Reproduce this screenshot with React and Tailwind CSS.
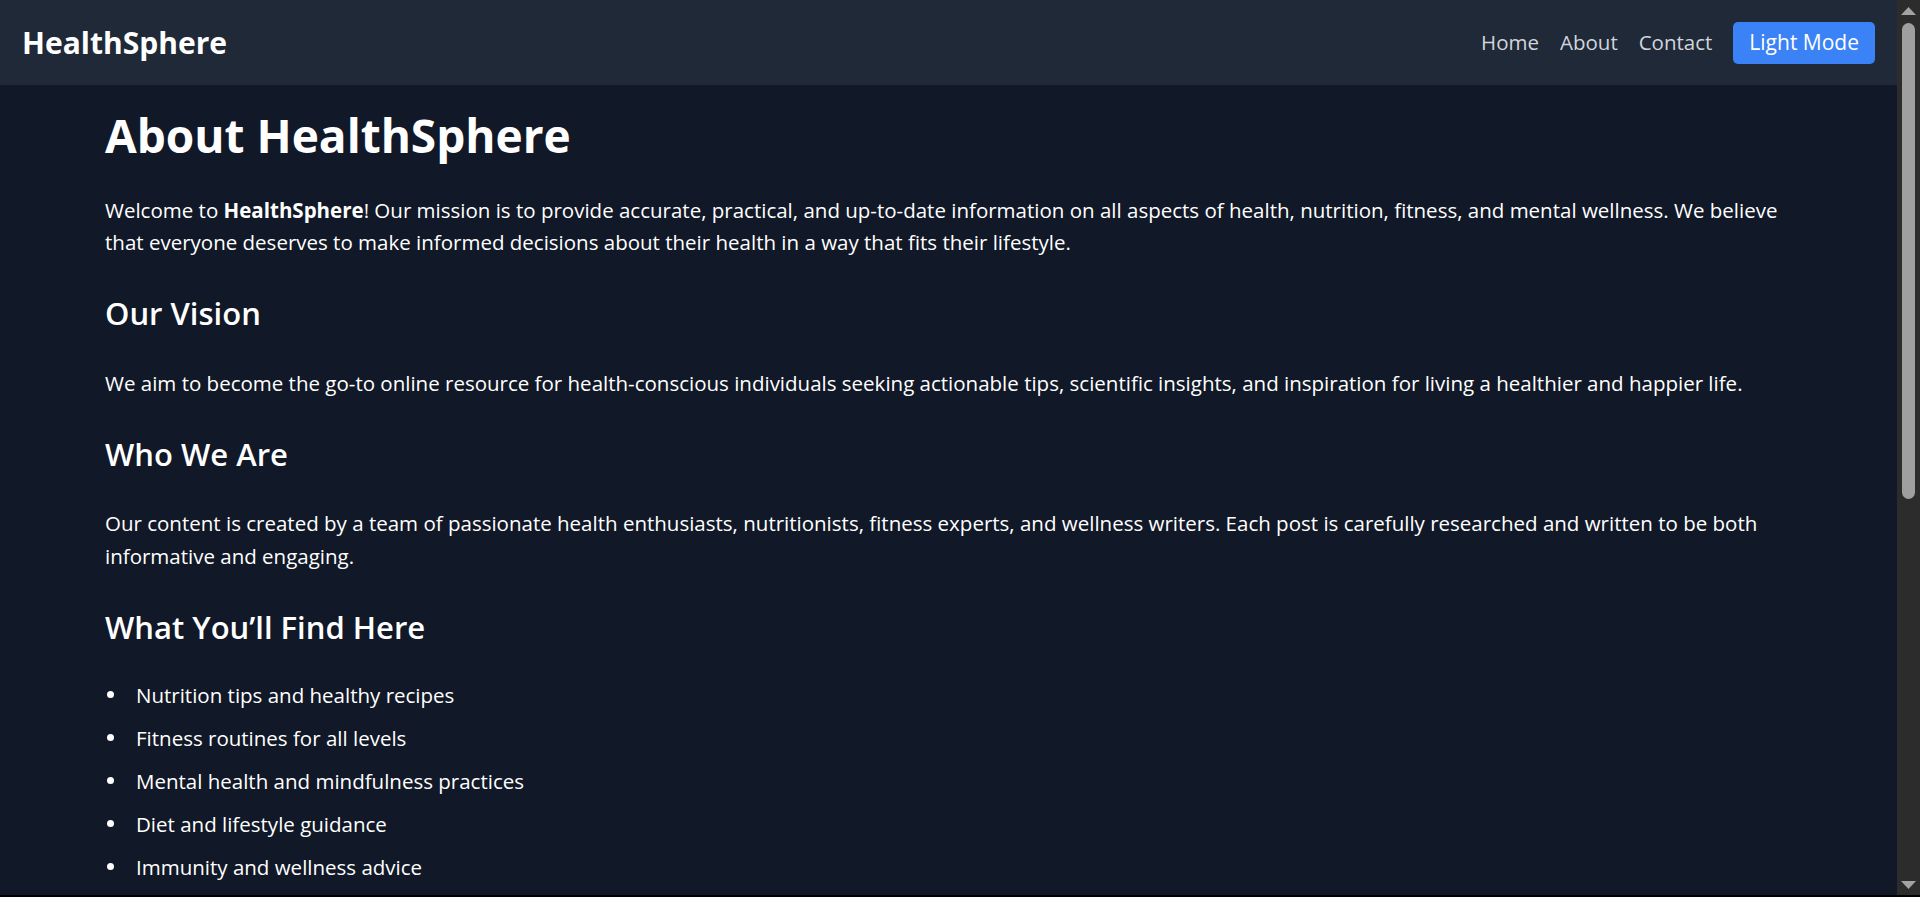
import React from 'react';

const features = [
  'Nutrition tips and healthy recipes',
  'Fitness routines for all levels',
  'Mental health and mindfulness practices',
  'Diet and lifestyle guidance',
  'Immunity and wellness advice',
];

const Navbar = () => {
  return (
    <nav className="h-[85px] bg-[#1f2937] px-[22px] flex justify-between items-center">
      <a href="#" className="text-white font-bold text-[30px] leading-[40px]">
        HealthSphere
      </a>
      <div className="flex items-center gap-[21px]">
        <a href="#" className="text-[#d1d5db] text-[20.5px]">Home</a>
        <a href="#" className="text-[#d1d5db] text-[20.5px]">About</a>
        <a href="#" className="text-[#d1d5db] text-[20.5px]">Contact</a>
        <button className="h-[42px] px-[16px] bg-[#3b82f6] text-white text-[21px] rounded-[5px]">
          Light Mode
        </button>
      </div>
    </nav>
  );
};

const Scrollbar = () => {
  return (
    <div className="w-[23px] bg-[#2c2c2c] flex flex-col items-center">
      <div className="h-[21px] flex items-center justify-center">
        <svg width="15" height="8" viewBox="0 0 15 8">
          <polygon points="7.5,0 15,8 0,8" fill="#a3a3a3" />
        </svg>
      </div>
      <div className="mt-[2px] w-[13px] h-[476px] rounded-full bg-[#9f9f9f]" />
      <div className="flex-1" />
      <div className="h-[21px] flex items-center justify-center">
        <svg width="15" height="8" viewBox="0 0 15 8">
          <polygon points="0,0 15,0 7.5,8" fill="#a3a3a3" />
        </svg>
      </div>
    </div>
  );
};

const App = () => {
  return (
    <div className="h-[897px] bg-black overflow-hidden font-['Open_Sans',sans-serif]">
      <div className="h-[895px] flex">
        <div className="flex-1 min-w-0 bg-[#111827] text-white overflow-hidden">
          <Navbar />
          <main className="px-[105px] pt-[22px]">
            <h1 className="text-[46px] leading-[56px] font-bold mb-[30.5px]">About HealthSphere</h1>
            <p className="text-[20.5px] leading-[32.5px] mb-[34.5px]">
              Welcome to <strong className="font-bold">HealthSphere</strong>! Our mission is to provide accurate, practical, and up-to-date information on all aspects of health, nutrition, fitness, and mental wellness. We believe that everyone deserves to make informed decisions about their health in a way that fits their lifestyle.
            </p>

            <h2 className="text-[31px] leading-[40px] font-semibold mb-[33.5px]">Our Vision</h2>
            <p className="text-[20.5px] leading-[32.5px] mb-[34.5px]">
              We aim to become the go-to online resource for health-conscious individuals seeking actionable tips, scientific insights, and inspiration for living a healthier and happier life.
            </p>

            <h2 className="text-[31px] leading-[40px] font-semibold mb-[33.5px]">Who We Are</h2>
            <p className="text-[20.5px] leading-[32.5px] mb-[34.5px]">
              Our content is created by a team of passionate health enthusiasts, nutritionists, fitness experts, and wellness writers. Each post is carefully researched and written to be both informative and engaging.
            </p>

            <h2 className="text-[31px] leading-[40px] font-semibold mb-[32px]">What You’ll Find Here</h2>
            <ul className="flex flex-col gap-[10.5px]">
              {features.map((item) => (
                <li key={item} className="flex items-center text-[20.5px] leading-[32.5px]">
                  <span className="ml-[2px] mr-[22px] w-[7px] h-[7px] rounded-full bg-white shrink-0" />
                  {item}
                </li>
              ))}
            </ul>
          </main>
        </div>
        <Scrollbar />
      </div>
    </div>
  );
};

export default App;
